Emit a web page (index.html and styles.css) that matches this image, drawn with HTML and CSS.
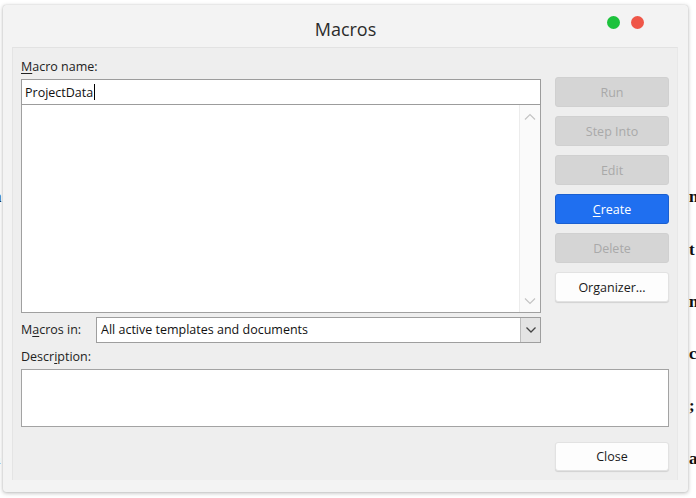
FILE: index.html
```html
<!DOCTYPE html>
<html>
<head>
<meta charset="utf-8">
<link rel="stylesheet" href="styles.css">
</head>
<body>
<div class="doc">
  <div class="doc-line"><span class="l">s</span><span class="r"></span></div>
  <div class="doc-line"><span class="l">n</span><span class="r">ne</span></div>
  <div class="doc-line"><span class="l">e</span><span class="r">t</span></div>
  <div class="doc-line"><span class="l">e</span><span class="r">m</span></div>
  <div class="doc-line"><span class="l">r</span><span class="r">c</span></div>
  <div class="doc-line"><span class="l">;</span><span class="r">;</span></div>
  <div class="doc-line"><span class="l">a</span><span class="r">a</span></div>
</div>

<div class="window">
  <div class="titlebar">
    <div class="title">Macros</div>
    <div class="dots"><span class="dot green"></span><span class="dot red"></span></div>
  </div>
  <div class="panel">
    <div class="top">
      <div class="left">
        <div class="label"><u>M</u>acro name:</div>
        <div class="namebox">ProjectData<span class="caret"></span></div>
        <div class="listbox">
          <div class="list-area"></div>
          <div class="scrollbar">
            <svg class="chev" width="12" height="8" viewBox="0 0 12 8"><path d="M1 6.5 L6 1.5 L11 6.5" fill="none" stroke="#c4c4c4" stroke-width="1.2"/></svg>
            <svg class="chev" width="12" height="8" viewBox="0 0 12 8"><path d="M1 1.5 L6 6.5 L11 1.5" fill="none" stroke="#c4c4c4" stroke-width="1.2"/></svg>
          </div>
        </div>
        <div class="inrow">
          <div class="label inlabel">M<u>a</u>cros in:</div>
          <div class="select">
            <div class="select-text">All active templates and documents</div>
            <div class="select-btn">
              <svg width="12" height="8" viewBox="0 0 12 8"><path d="M1.5 1.5 L6 6 L10.5 1.5" fill="none" stroke="#444" stroke-width="1.3"/></svg>
            </div>
          </div>
        </div>
      </div>
      <div class="buttons">
        <div class="btn disabled">Run</div>
        <div class="btn disabled">Step Into</div>
        <div class="btn disabled">Edit</div>
        <div class="btn primary"><u>C</u>reate</div>
        <div class="btn disabled">Delete</div>
        <div class="btn normal">Or<u>g</u>anizer...</div>
      </div>
    </div>
    <div class="label desclabel">Descr<u>i</u>ption:</div>
    <div class="descbox"></div>
    <div class="footer">
      <div class="btn normal">Close</div>
    </div>
  </div>
</div>
</body>
</html>
```

FILE: styles.css
```css
* { box-sizing: border-box; }

html, body {
  margin: 0;
  padding: 0;
}

body {
  width: 696px;
  height: 498px;
  background: #ffffff;
  position: relative;
  overflow: hidden;
  font-family: "Open Sans", "Noto Sans", sans-serif;
  font-size: 12.5px;
  color: #1e1e1e;
}

/* background document */
.doc {
  position: absolute;
  left: 0;
  top: 135px;
  width: 696px;
  font-family: "Liberation Serif", serif;
  font-size: 17px;
  font-weight: bold;
  color: #111;
}

.doc-line {
  height: 52.3px;
  position: relative;
}

.doc-line .l {
  position: absolute;
  left: -8px;
}

.doc-line .r {
  position: absolute;
  left: 689px;
}

/* dialog window */
.window {
  position: absolute;
  left: 3px;
  top: 5px;
  width: 685px;
  height: 487px;
  background: #f3f3f3;
  border-radius: 3px;
  box-shadow: 0 1px 4px rgba(0, 0, 0, 0.28), 0 0 1px rgba(0, 0, 0, 0.2);
  display: flex;
  flex-direction: column;
}

.titlebar {
  height: 42px;
  position: relative;
  display: flex;
  align-items: center;
  justify-content: center;
  flex: none;
}

.title {
  font-size: 18px;
  color: #2b2b2b;
  margin-top: 5px;
  letter-spacing: 0;
}

.dots {
  position: absolute;
  right: 44px;
  top: 11px;
  display: flex;
  gap: 11px;
}

.dot {
  width: 13px;
  height: 13px;
  border-radius: 50%;
}

.dot.green { background: #1cc23c; }
.dot.red { background: #ef5648; }

.panel {
  margin: 0 10px 12px 9px;
  flex: 1;
  background: #eeeeee;
  border-top: 1px solid #e2e2e2;
  border-left: 1px solid #e4e4e4;
  border-right: 1px solid #e8e8e8;
  padding: 10px 8px 0 8px;
  display: flex;
  flex-direction: column;
}

.top {
  display: flex;
  gap: 14px;
}

.left {
  width: 520px;
  flex: none;
  display: flex;
  flex-direction: column;
}

.label {
  height: 18px;
  line-height: 18px;
  color: #222;
}

.label u {
  text-decoration-thickness: 1px;
  text-underline-offset: 2px;
}

.namebox {
  margin-top: 3px;
  height: 26px;
  border: 1px solid #9c9c9c;
  background: #fff;
  padding: 0 3px;
  line-height: 23px;
  display: flex;
  align-items: center;
  color: #111;
}

.caret {
  display: inline-block;
  width: 1px;
  height: 16px;
  background: #000;
  margin-left: 1px;
}

.listbox {
  height: 208px;
  border: 1px solid #a0a0a0;
  border-top: none;
  background: #fff;
  display: flex;
}

.list-area {
  flex: 1;
}

.scrollbar {
  width: 21px;
  background: #fafafa;
  border-left: 1px solid #ececec;
  display: flex;
  flex-direction: column;
  justify-content: space-between;
  align-items: center;
  padding: 8px 0 7px;
}

.chev { display: block; }

.inrow {
  margin-top: 4px;
  display: flex;
  align-items: center;
}

.inlabel {
  width: 75px;
}

.select {
  flex: 1;
  height: 26px;
  border: 1px solid #9e9e9e;
  background: #fff;
  display: flex;
}

.select-text {
  flex: 1;
  padding-left: 4px;
  line-height: 24px;
  color: #111;
}

.select-btn {
  width: 20px;
  background: #e4e4e4;
  border-left: 1px solid #bdbdbd;
  display: flex;
  align-items: center;
  justify-content: center;
}

.buttons {
  width: 114px;
  flex: none;
  margin-top: 19px;
  display: flex;
  flex-direction: column;
  gap: 9px;
}

.btn {
  height: 30px;
  border-radius: 3px;
  display: flex;
  align-items: center;
  justify-content: center;
  font-size: 12.5px;
}

.btn u {
  text-decoration-thickness: 1px;
  text-underline-offset: 2px;
}

.btn.disabled {
  background: #d5d5d5;
  color: #a9a9a9;
  border: 1px solid #d0d0d0;
}

.btn.primary {
  background: #1f6ff0;
  border: 1px solid #1a5fd0;
  color: #ffffff;
}

.btn.normal {
  background: #fdfdfd;
  border: 1px solid #e2e2e2;
  box-shadow: 0 1px 1px rgba(0, 0, 0, 0.12);
  color: #1a1a1a;
}

.desclabel {
  margin-top: 5px;
}

.descbox {
  margin-top: 3px;
  height: 58px;
  border: 1px solid #a3a3a3;
  background: #fff;
}

.footer {
  margin-top: 15px;
  display: flex;
  justify-content: flex-end;
}

.footer .btn {
  width: 114px;
  height: 29px;
}
```
